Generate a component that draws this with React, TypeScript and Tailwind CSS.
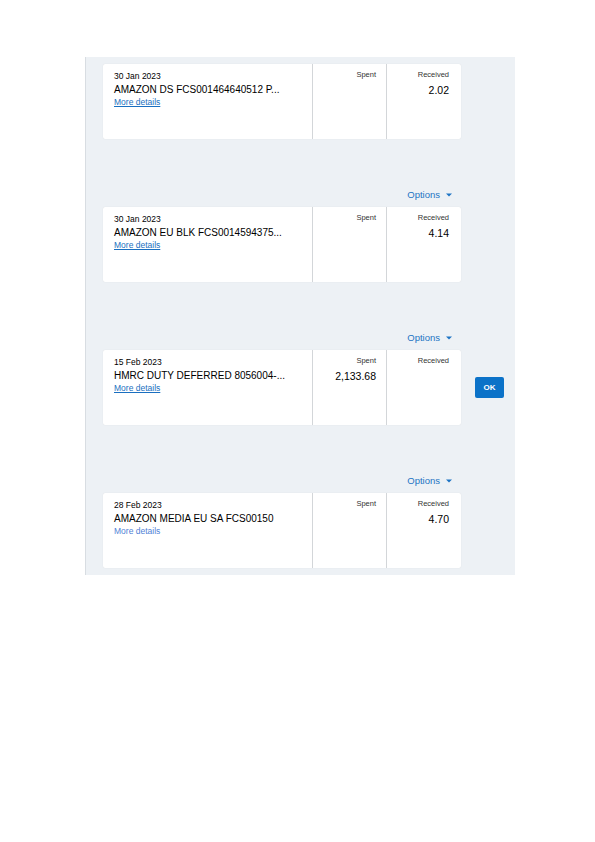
import React from "react";

type Tx = {
  date: string;
  desc: string;
  spent?: string;
  received?: string;
  plainLink?: boolean;
  ok?: boolean;
  options: boolean;
};

const items: Tx[] = [
  { date: "30 Jan 2023", desc: "AMAZON DS FCS001464640512 P...", received: "2.02", options: false },
  { date: "30 Jan 2023", desc: "AMAZON EU BLK FCS0014594375...", received: "4.14", options: true },
  { date: "15 Feb 2023", desc: "HMRC DUTY DEFERRED 8056004-...", spent: "2,133.68", options: true, ok: true },
  { date: "28 Feb 2023", desc: "AMAZON MEDIA EU SA FCS00150", received: "4.70", options: true, plainLink: true },
];

function Caret() {
  return (
    <svg width="6" height="4" viewBox="0 0 6 4" className="ml-[6px]">
      <path d="M0 0.5 L6 0.5 L3 3.5 Z" fill="#1d74c4" />
    </svg>
  );
}

function Card({ t }: { t: Tx }) {
  return (
    <div className="flex w-[358px] h-[75px] bg-white rounded-[2px] shadow-[0_0_1px_rgba(0,0,0,0.12)]">
      <div className="w-[210px] border-r border-[#d3d6d9] pl-[11px] pt-[7px] text-black">
        <div className="text-[8.5px] leading-[11px]">{t.date}</div>
        <div className="text-[10px] leading-[15px] whitespace-nowrap">{t.desc}</div>
        {t.plainLink ? (
          <div className="text-[8.5px] leading-[11px] text-[#4f7fd6]">More details</div>
        ) : (
          <div className="text-[8.5px] leading-[11px] text-[#1a6fc0] underline">More details</div>
        )}
      </div>
      <div className="w-[74px] border-r border-[#d3d6d9] pr-[10px] pt-[6px] text-right">
        <div className="text-[7.5px] leading-[10px] text-[#333]">Spent</div>
        {t.spent && <div className="mt-[3px] text-[10.5px] leading-[14px] text-black">{t.spent}</div>}
      </div>
      <div className="flex-1 pr-[12px] pt-[6px] text-right">
        <div className="text-[7.5px] leading-[10px] text-[#333]">Received</div>
        {t.received && <div className="mt-[3px] text-[10.5px] leading-[14px] text-black">{t.received}</div>}
      </div>
    </div>
  );
}

export default function App() {
  return (
    <div
      className="bg-white w-[595px] h-[842px] pt-[57px] pl-[85px]"
      style={{ fontFamily: '"Liberation Sans", Arial, sans-serif' }}
    >
      <div className="w-[430px] bg-[#edf1f5] border-l border-[#d8dde2] pl-[17px] pt-[7px] pb-[7px] flex flex-col">
        {items.map((t, i) => (
          <div key={i} className={i > 0 ? "mt-[50px]" : ""}>
            {t.options && (
              <div className="w-[358px] h-[12px] mb-[6px] flex items-center justify-end pr-[9px]">
                <span className="text-[9.5px] leading-[12px] text-[#1d74c4]">Options</span>
                <Caret />
              </div>
            )}
            <div className="flex items-center gap-[14px]">
              <Card t={t} />
              {t.ok && (
                <button className="w-[29px] h-[21px] bg-[#0b72c8] rounded-[2px] text-white text-[8px] font-bold flex items-center justify-center">
                  OK
                </button>
              )}
            </div>
          </div>
        ))}
      </div>
    </div>
  );
}
